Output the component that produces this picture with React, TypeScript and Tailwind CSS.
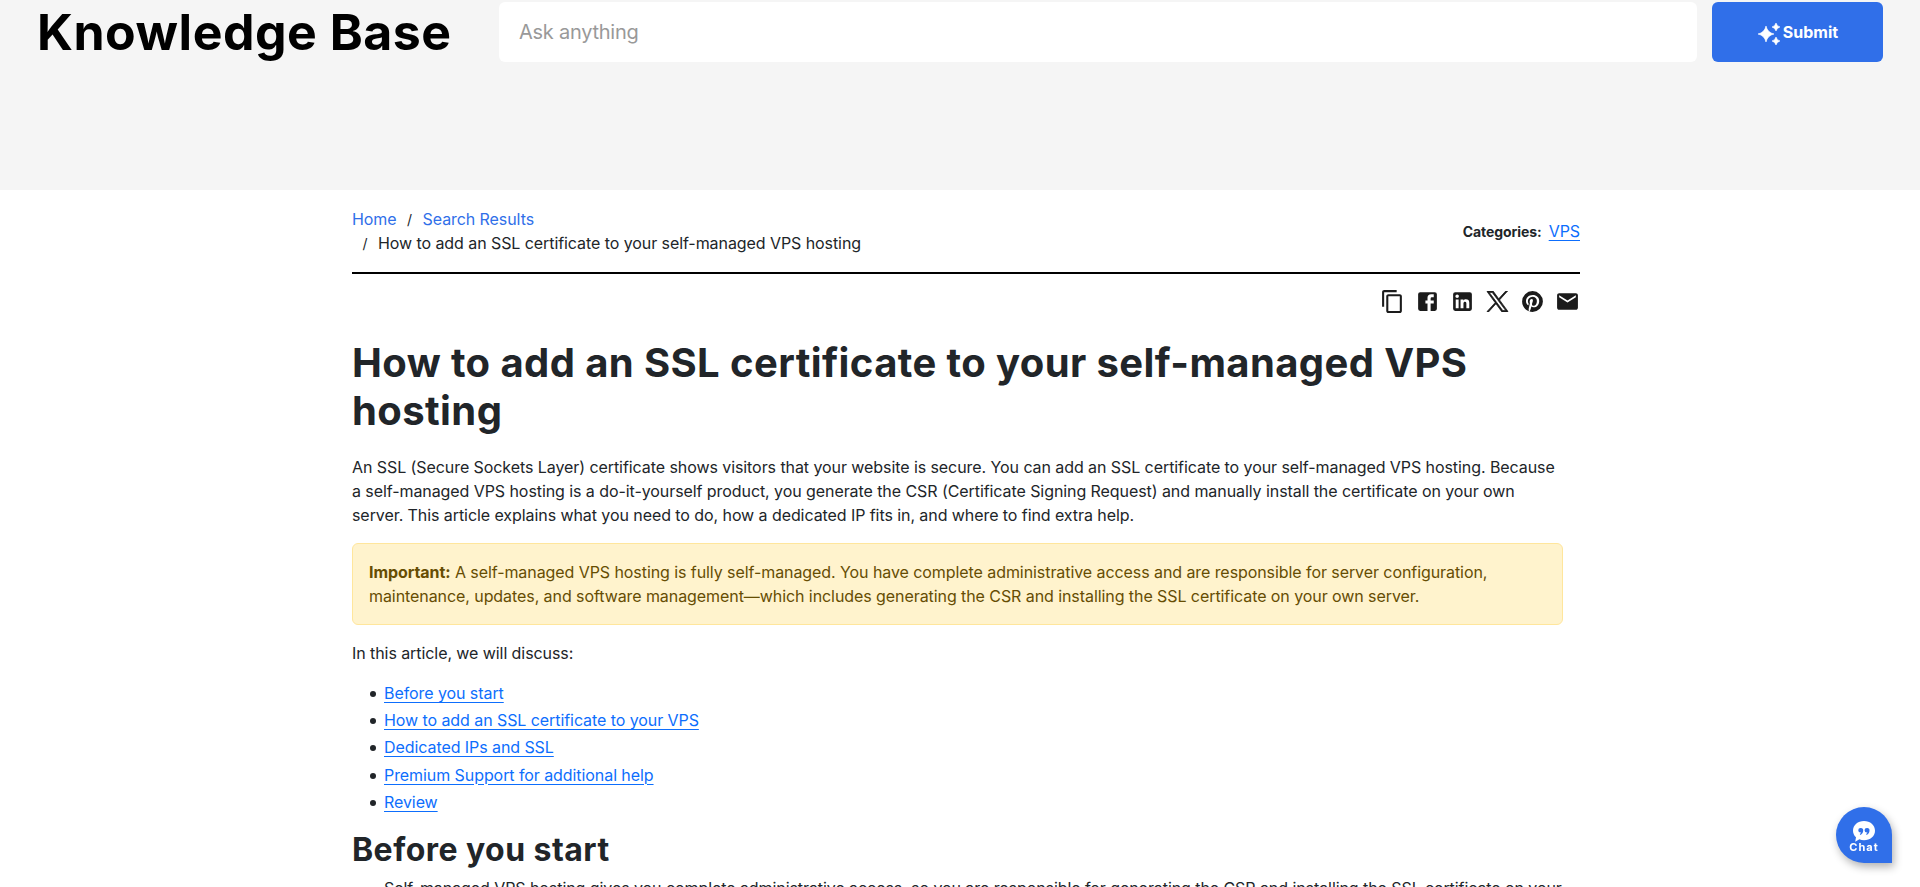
import type { ReactNode } from "react";

const links = [
  "Before you start",
  "How to add an SSL certificate to your VPS",
  "Dedicated IPs and SSL",
  "Premium Support for additional help",
  "Review",
];

const linkClass =
  "text-[#0d6efd] underline decoration-1 underline-offset-[3px]";

function Icon({ label, children }: { label: string; children: ReactNode }) {
  return (
    <a href="#" aria-label={label} className="block size-[25px]">
      <svg viewBox="0 0 24 24" className="size-[25px]" fill="#1b1b1b">
        {children}
      </svg>
    </a>
  );
}

function Header() {
  return (
    <header className="flex h-[190px] items-start bg-[#f5f5f5] pt-0.5 pr-[37px] pl-[37px]">
      <div className="flex h-[60px] w-[462px] shrink-0 items-center text-[50px] font-bold tracking-[0.5px] whitespace-nowrap text-black">
        Knowledge Base
      </div>
      <input
        placeholder="Ask anything"
        className="h-[60px] min-w-0 flex-1 rounded-md bg-white px-5 text-xl tracking-[-0.25px] placeholder:text-[#999]"
      />
      <button className="ml-[15px] flex h-[60px] w-[171px] items-center justify-center rounded-md bg-[#306fe9] text-base font-bold tracking-normal text-white">
        <svg viewBox="0 0 24 24" className="mt-1 mr-0.5 size-6" fill="currentColor">
          <path d="M9 4Q10.500 10.500 17 12Q10.500 13.500 9 20Q7.500 13.500 1 12Q7.500 10.500 9 4ZM19 1Q19.800 4.200 23 5Q19.800 5.800 19 9Q18.200 5.800 15 5Q18.200 4.200 19 1ZM19 15Q19.800 18.200 23 19Q19.800 19.800 19 23Q18.200 19.800 15 19Q18.200 18.200 19 15Z" stroke="currentColor" strokeWidth="0.6" />
        </svg>
        Submit
      </button>
    </header>
  );
}

function ShareBar() {
  return (
    <div className="mt-[15px] flex justify-end gap-2.5">
      <Icon label="Copy link">
        <path d="M16 1H4c-1.100 0-2 .9-2 2v14h2V3h12V1zm3 4H8c-1.100 0-2 .9-2 2v14c0 1.100.9 2 2 2h11c1.100 0 2-.9 2-2V7c0-1.100-.9-2-2-2zm0 16H8V7h11v14z" />
      </Icon>
      <Icon label="Facebook">
        <path d="M5 3h14a2 2 0 0 1 2 2v14a2 2 0 0 1-2 2h-4v-7h3v-3h-3V9a1 1 0 0 1 1-1h2V5h-2.500A3.500 3.500 0 0 0 12 8.500V11h-2v3h2v7H5a2 2 0 0 1-2-2V5a2 2 0 0 1 2-2z" />
      </Icon>
      <Icon label="LinkedIn">
        <path d="M19 3a2 2 0 0 1 2 2v14a2 2 0 0 1-2 2H5a2 2 0 0 1-2-2V5a2 2 0 0 1 2-2h14m-.5 15.500v-5.300a3.260 3.260 0 0 0-3.260-3.260c-.85 0-1.840.52-2.320 1.300v-1.110h-2.790v8.370h2.790v-4.930c0-.77.62-1.400 1.390-1.400a1.400 1.400 0 0 1 1.400 1.400v4.930h2.790M6.880 8.560a1.680 1.680 0 0 0 1.680-1.680c0-.93-.75-1.690-1.680-1.690a1.690 1.690 0 0 0-1.690 1.690c0 .93.76 1.680 1.690 1.680m1.390 9.940v-8.370H5.500v8.370h2.770z" />
      </Icon>
      <Icon label="X">
        <svg x="1.6" y="2" width="20.8" height="20" viewBox="0 0 1200 1227" preserveAspectRatio="none">
          <path
            stroke="#1b1b1b"
            strokeWidth="42"
            d="M714.163 519.284L1160.890 0H1055.030L667.137 450.887L357.328 0H0L468.492 681.821L0 1226.370H105.866L515.491 750.218L842.672 1226.370H1200L714.137 519.284ZM569.165 687.828L521.697 619.934L144.011 79.694H306.615L611.412 515.685L658.880 583.579L1055.080 1150.300H892.476L569.165 687.854Z"
          />
        </svg>
      </Icon>
      <Icon label="Pinterest">
        <path d="M9.040 21.540c.96.29 1.930.46 2.960.46a10 10 0 0 0 10-10A10 10 0 0 0 12 2 10 10 0 0 0 2 12c0 4.250 2.670 7.900 6.440 9.340-.09-.78-.18-2.070 0-2.960l1.150-4.940s-.29-.58-.29-1.500c0-1.380.86-2.410 1.840-2.410.86 0 1.260.63 1.260 1.440 0 .86-.57 2.090-.86 3.270-.17.98.52 1.840 1.520 1.840 1.780 0 3.160-1.900 3.160-4.580 0-2.400-1.720-4.040-4.190-4.040-2.820 0-4.480 2.100-4.480 4.310 0 .86.28 1.730.74 2.300.09.06.09.14.06.29l-.29 1.090c0 .17-.11.23-.28.11-1.280-.56-2.020-2.380-2.020-3.850 0-3.160 2.240-6.030 6.560-6.030 3.440 0 6.120 2.470 6.120 5.750 0 3.440-2.130 6.200-5.180 6.200-.97 0-1.920-.52-2.260-1.130l-.67 2.370c-.23.86-.86 2.010-1.290 2.700z" />
      </Icon>
      <Icon label="Email">
        <path d="M20 4H4c-1.100 0-1.990.9-1.990 2L2 18c0 1.100.9 2 2 2h16c1.100 0 2-.9 2-2V6c0-1.100-.9-2-2-2zm0 4l-8 5-8-5V6l8 5 8-5v2z" />
      </Icon>
    </div>
  );
}

function ChatButton() {
  return (
    <button
      className="fixed top-[807px] left-[1836px] flex size-14 flex-col items-center rounded-full rounded-br-none bg-[#306fe9] pt-[13px] text-white shadow-[2px_4px_8px_rgba(0,0,0,0.3)]"
    >
      <svg viewBox="0 0 22 22" className="h-[22px] w-[22px] shrink-0">
        <path
          fill="#fff"
          d="M11 1C17.200 1 22 5.200 22 10.700S17.200 20.200 11 20.200C9.300 20.200 7.800 19.900 6.400 19.300L2.200 21.800 3 17.300C1.100 15.500 0 13.300 0 10.700 0 5.200 4.800 1 11 1Z"
        />
        <g fill="#306fe9">
          <path d="M7.600 7.900a2.500 2.500 0 0 1 2.600 2.700c0 2.200-1.200 3.600-2.900 4.300l-.5-.9c.8-.4 1.200-.8 1.300-1.400a2.400 2.400 0 0 1-.5 0 2.350 2.350 0 0 1 0-4.700z" />
          <path d="M13.900 7.900a2.500 2.500 0 0 1 2.600 2.700c0 2.200-1.200 3.600-2.900 4.300l-.5-.9c.8-.4 1.200-.8 1.300-1.400a2.400 2.400 0 0 1-.5 0 2.350 2.350 0 0 1 0-4.700z" />
        </g>
      </svg>
      <span className="-mt-0.5 text-[11px] leading-[14px] font-bold tracking-[1px]">Chat</span>
    </button>
  );
}

export default function App() {
  return (
    <div className="h-[887px] overflow-hidden bg-white font-['Inter',sans-serif] text-base leading-6 tracking-[-0.073px] text-[#212529]">
      <Header />
      <main className="mr-[340px] ml-[352px]">
        <div className="flex h-[84px] items-start justify-between border-b-2 border-black pt-[17px]">
          <nav>
            <div className="flex h-6">
              <a href="#" className="text-[#306fe9]">Home</a>
              <span className="mx-[10.5px] pt-px text-sm leading-6">/</span>
              <a href="#" className="text-[#306fe9]">Search Results</a>
            </div>
            <div className="flex h-6">
              <span className="mx-[10.5px] pt-px text-sm leading-6">/</span>
              How to add an SSL certificate to your self-managed VPS hosting
            </div>
          </nav>
          <div className="mt-3 flex h-6 items-start gap-[7px]">
            <span className="pt-px text-sm leading-6 font-bold">Categories:</span>
            <a href="#" className={linkClass}>VPS</a>
          </div>
        </div>
        <ShareBar />
        <article className="w-[1211px]">
          <h1 className="mt-[25px] text-[40px] leading-[48px] font-bold tracking-[0.4px]">
            How to add an SSL certificate to your self-managed VPS hosting
          </h1>
          <p className="mt-5">
            An SSL (Secure Sockets Layer) certificate shows visitors that your website is secure. You can add an SSL
            certificate to your self-managed VPS hosting. Because a self-managed VPS hosting is a do-it-yourself
            product, you generate the CSR (Certificate Signing Request) and manually install the certificate on your
            own server. This article explains what you need to do, how a dedicated IP fits in, and where to find extra
            help.
          </p>
          <div className="mt-4 rounded-md border border-[#ffe69c] bg-[#fff3cd] p-4 text-[#664d03]">
            <b className="font-bold">Important:</b> A self-managed VPS hosting is fully self-managed. You have complete
            administrative access and are responsible for server configuration, maintenance, updates, and software
            management—which includes generating the CSR and installing the SSL certificate on your own server.
          </div>
          <p className="mt-4">In this article, we will discuss:</p>
          <ul className="mt-4 pl-[18px]">
            {links.map((text) => (
              <li key={text} className="mb-[3.2px] flex items-center gap-2">
                <span className="mt-0.5 size-1.5 rounded-full bg-[#212529]" />
                <a href="#" className={linkClass}>{text}</a>
              </li>
            ))}
          </ul>
          <h2 className="mt-[17px] text-[32px] leading-[38px] font-bold tracking-[0.45px]">Before you start</h2>
          <ul className="mt-[7px] pl-8">
            <li className="-mr-2">
              Self-managed VPS hosting gives you complete administrative access, so you are responsible for generating
              the CSR and installing the SSL certificate on your
              <br />
              own server.
            </li>
          </ul>
        </article>
      </main>
      <ChatButton />
    </div>
  );
}
